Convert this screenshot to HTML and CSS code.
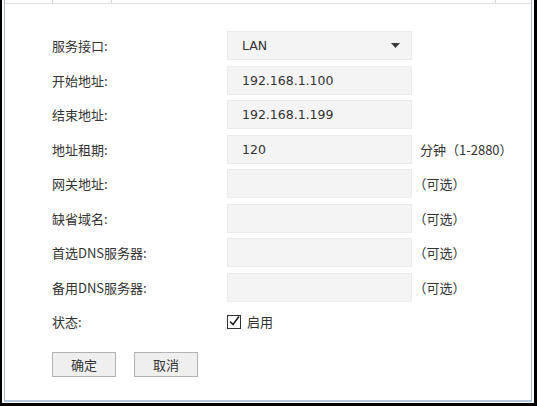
FILE: index.html
```html
<!DOCTYPE html>
<html lang="zh-CN">
<head>
<meta charset="utf-8">
<title>DHCP服务器</title>
<link rel="stylesheet" href="styles.css">
</head>
<body>
<div class="frame">
  <div class="panel">
    <div class="tabs">
      <span class="tab t1"></span>
      <span class="tab t2"></span>
      <span class="tab t3"></span>
      <span class="tab t4"></span>
    </div>
    <form class="form">
      <div class="row">
        <label class="label">服务接口:</label>
        <div class="field select"><span>LAN</span>
          <svg class="caret" width="9" height="5" viewBox="0 0 9 5"><path d="M0 0H9L4.5 5Z" fill="#3a3a3a"/></svg>
        </div>
      </div>
      <div class="row">
        <label class="label">开始地址:</label>
        <div class="field">192.168.1.100</div>
      </div>
      <div class="row">
        <label class="label">结束地址:</label>
        <div class="field">192.168.1.199</div>
      </div>
      <div class="row">
        <label class="label">地址租期:</label>
        <div class="field">120</div>
        <span class="suffix">分钟（1-2880）</span>
      </div>
      <div class="row">
        <label class="label">网关地址:</label>
        <div class="field"></div>
        <span class="suffix opt">（可选）</span>
      </div>
      <div class="row">
        <label class="label">缺省域名:</label>
        <div class="field"></div>
        <span class="suffix opt">（可选）</span>
      </div>
      <div class="row">
        <label class="label">首选DNS服务器:</label>
        <div class="field"></div>
        <span class="suffix opt">（可选）</span>
      </div>
      <div class="row">
        <label class="label">备用DNS服务器:</label>
        <div class="field"></div>
        <span class="suffix opt">（可选）</span>
      </div>
      <div class="row status">
        <label class="label">状态:</label>
        <div class="check">
          <svg width="14" height="14" viewBox="0 0 14 14"><rect x="0.5" y="0.5" width="13" height="13" fill="#fff" stroke="#333"/><path d="M3 6.5L6 9.5L12 1.5" fill="none" stroke="#222" stroke-width="1.6"/></svg>
          <span>启用</span>
        </div>
      </div>
      <div class="buttons">
        <button type="button" class="btn">确定</button>
        <button type="button" class="btn">取消</button>
      </div>
    </form>
  </div>
</div>
</body>
</html>
```

FILE: styles.css
```css
html, body {
  margin: 0;
  padding: 0;
  background: #fff;
}
body {
  font-family: "Noto Sans CJK SC", "Microsoft YaHei", sans-serif;
  font-size: 13px;
  color: #333;
}
.frame {
  box-sizing: border-box;
  width: 537px;
  height: 406px;
  border-left: 2px solid #000;
  border-right: 3px solid #000;
  border-bottom: 3px solid #000;
  padding: 0 2px 1px 2px;
}
.panel {
  box-sizing: border-box;
  height: 100%;
  border-left: 1px solid #a8bdd4;
  border-right: 1px solid #a8bdd4;
  border-bottom: 2px solid #b4c6da;
}
.tabs {
  display: flex;
  height: 3px;
  border-bottom: 1px solid #dedede;
}
.tab {
  display: block;
  border-right: 1px solid #d4d4d4;
}
.t1 { width: 47px; }
.t2 { width: 58px; }
.t3 { width: 383px; }
.t4 { flex: 1; border-right: none; }
.form {
  margin: 0;
  padding: 27px 0 0 47px;
}
.row {
  display: flex;
  align-items: center;
  height: 29px;
  margin-bottom: 5.5px;
}
.label {
  width: 175px;
  flex: none;
}
.field {
  box-sizing: border-box;
  width: 185px;
  height: 29px;
  flex: none;
  background: #f4f4f4;
  border: 1px solid #ebebeb;
  padding-left: 14px;
  display: flex;
  align-items: center;
  font-family: "DejaVu Sans", "Noto Sans CJK SC", sans-serif;
  font-size: 12.5px;
  color: #333;
}
.select {
  justify-content: space-between;
  padding-right: 11px;
}
.caret {
  display: block;
}
.suffix {
  margin-left: 8px;
  white-space: nowrap;
}
.opt {
  font-feature-settings: "halt";
}
.status {
  margin-top: 2.5px;
}
.check {
  display: flex;
  align-items: center;
  gap: 6px;
}
.check svg {
  display: block;
}
.buttons {
  display: flex;
  gap: 18px;
  margin-top: 16px;
}
.btn {
  box-sizing: border-box;
  width: 64px;
  height: 25px;
  background: #efefef;
  border: 1px solid #b2b2b2;
  border-radius: 0;
  font-family: "Noto Sans CJK SC", "Microsoft YaHei", sans-serif;
  font-size: 13px;
  color: #333;
  padding: 0;
}
```
